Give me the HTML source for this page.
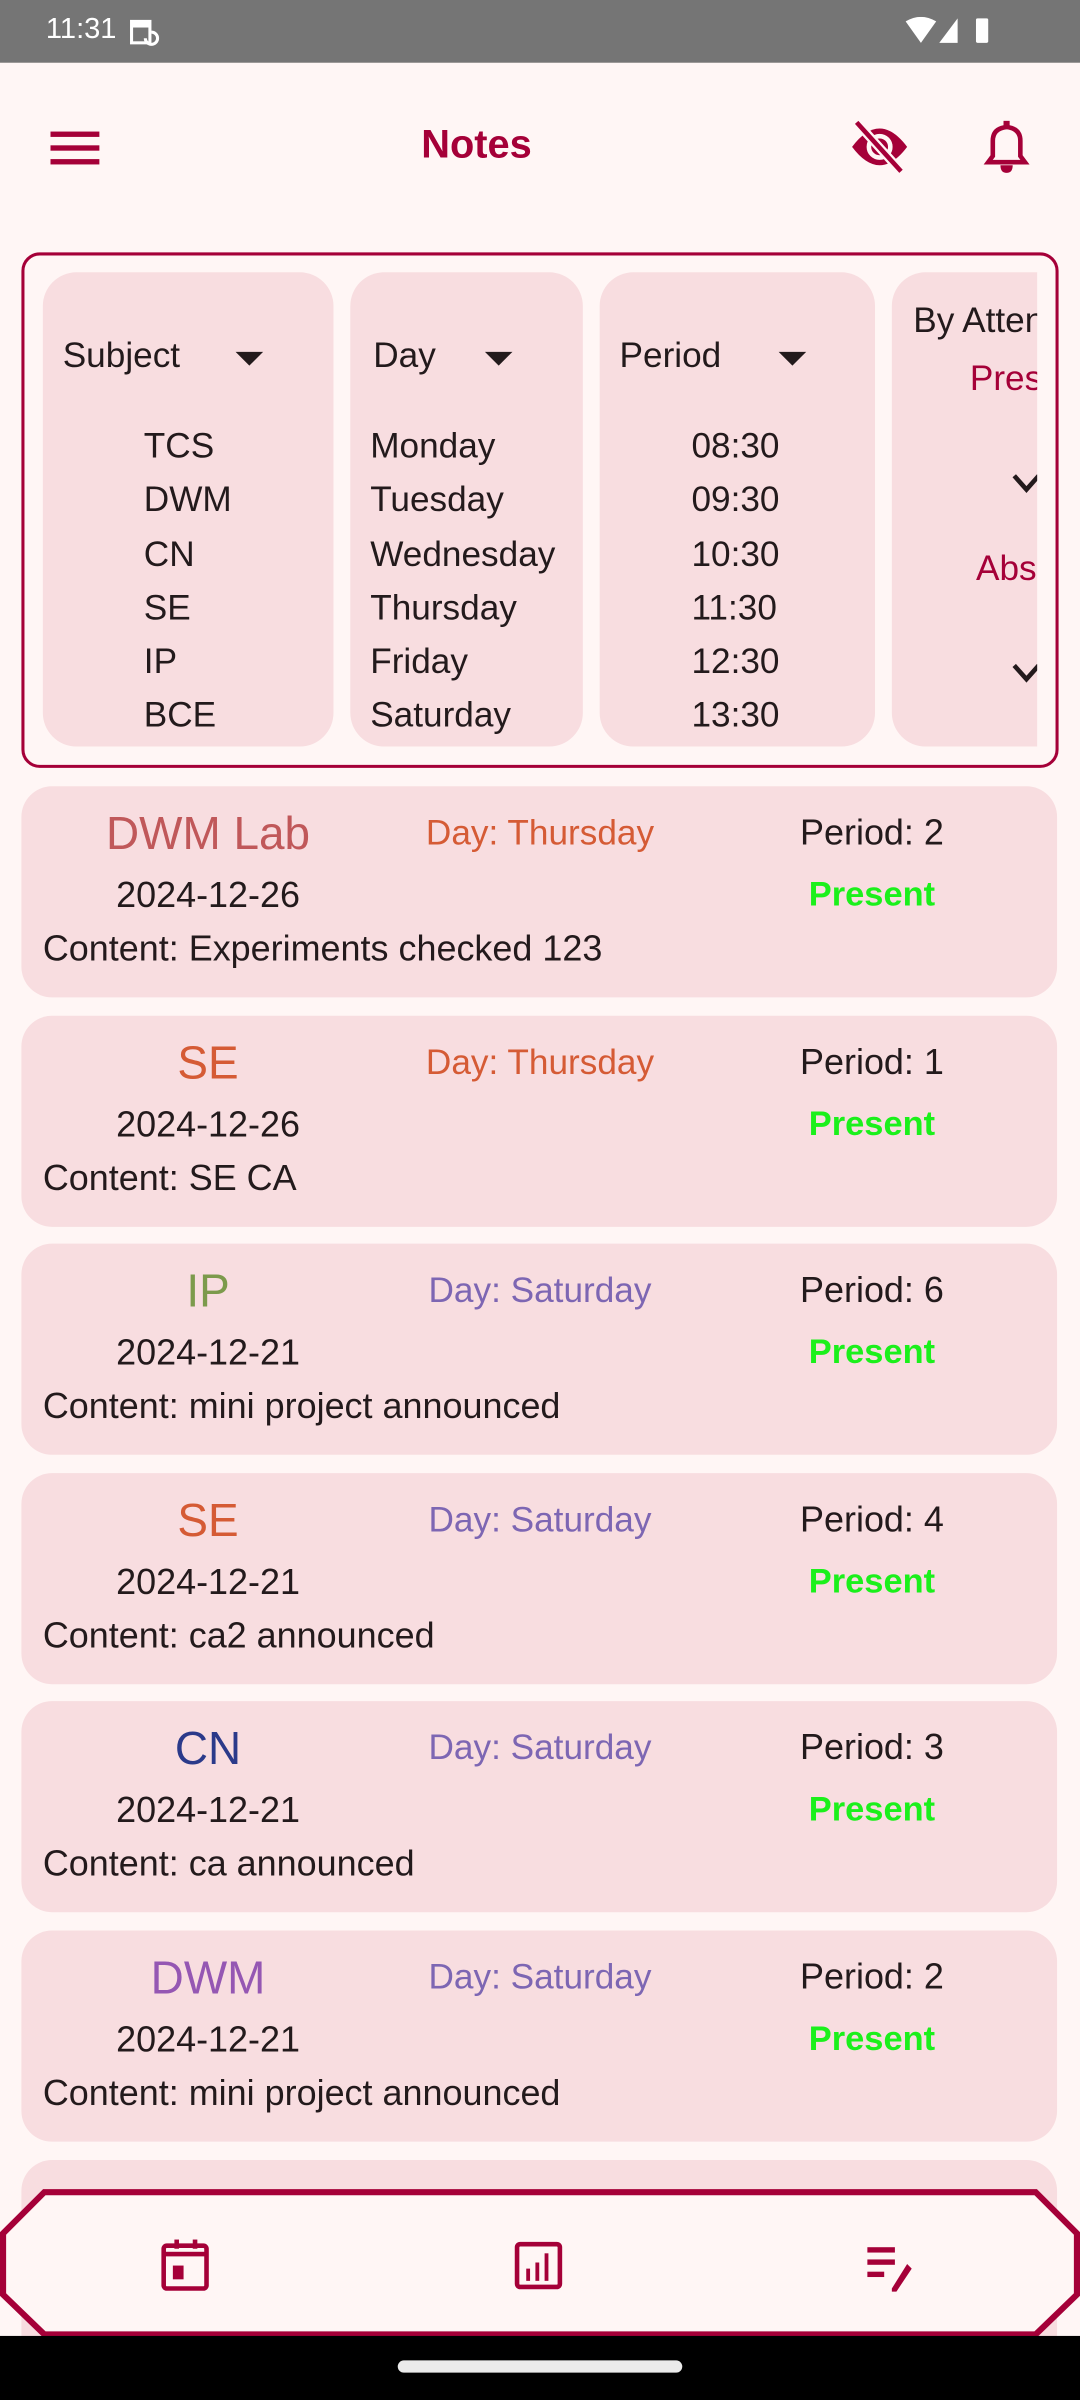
<!DOCTYPE html>
<html><head><meta charset="utf-8"><style>
*{margin:0;padding:0;box-sizing:border-box}
html,body{width:1080px;height:2400px;overflow:hidden;background:#fff6f5}
#w{position:absolute;left:0;top:0;width:706px;height:1569px;transform:scale(1.52975);transform-origin:0 0;font-family:"Liberation Sans",sans-serif;color:#231a1c;background:#fff6f5}
.a{position:absolute;white-space:nowrap}
.col{position:absolute;top:178px;height:310px;background:#f8dde0;border-radius:22px;overflow:hidden}
.li{position:absolute;font-size:23px;line-height:26px;white-space:nowrap}
.card{position:absolute;left:14px;width:677px;height:138px;background:#f8dde0;border-radius:20px}
.card div{white-space:nowrap}
.card .s{position:absolute;left:0;width:244px;text-align:center;top:14px;font-size:30px;line-height:36px}
.card .d{position:absolute;left:0;width:244px;text-align:center;top:57px;font-size:23.5px;line-height:28px}
.card .dy{position:absolute;left:234px;width:210px;text-align:center;top:16px;font-size:23px;line-height:28px}
.card .p{position:absolute;left:460px;width:192px;text-align:center;top:16px;font-size:23.5px;line-height:28px}
.card .pr{position:absolute;left:460px;width:192px;text-align:center;top:57px;font-size:22.5px;line-height:28px;font-weight:bold;color:#1bf01b}
.card .c{position:absolute;left:14px;top:92px;font-size:23.5px;line-height:28px}
.tri{position:absolute;width:0;height:0;border-left:9px solid transparent;border-right:9px solid transparent;border-top:9px solid #231a1c}
</style></head><body><div id="w">
<div class="a" style="left:0;top:0;width:706px;height:41px;background:#757575"></div>
<div class="a" style="left:30px;top:9px;color:#fff;font-size:19px">11:31</div>
<svg class="a" style="left:84px;top:10px" width="22" height="22" viewBox="0 0 22 22"><rect x="2" y="4" width="12" height="14" fill="none" stroke="#fff" stroke-width="2"/><rect x="2" y="4" width="12" height="4" fill="#fff"/><path d="M11 15a4 4 0 1 0 4-4" fill="none" stroke="#fff" stroke-width="2"/></svg>
<svg class="a" style="left:592px;top:11px" width="70" height="20" viewBox="0 0 70 20"><path d="M0 3Q10 -3 20 3L10 17Z" fill="#fff"/><path d="M34 1V17H22Z" fill="#fff"/><rect x="46" y="1" width="8" height="16" rx="1" fill="#fff"/></svg>
<svg class="a" style="left:33px;top:86px" width="32" height="22" viewBox="0 0 32 22"><rect y="0" width="32" height="3.5" fill="#a50038"/><rect y="9" width="32" height="3.5" fill="#a50038"/><rect y="18" width="32" height="3.5" fill="#a50038"/></svg>
<div class="a" style="left:0;width:623px;text-align:center;top:79px;font-size:26px;font-weight:bold;color:#a50038">Notes</div>
<svg class="a" style="left:555px;top:78px" width="40" height="36" viewBox="0 0 40 36"><path d="M2 18Q20 -6 38 18Q20 42 2 18Z" fill="#a50038"/><circle cx="20" cy="18" r="7" fill="none" stroke="#fff6f5" stroke-width="3"/><path d="M5 2L34 34" stroke="#fff6f5" stroke-width="6"/><path d="M5 2L34 34" stroke="#a50038" stroke-width="3"/></svg>
<svg class="a" style="left:641px;top:78px" width="34" height="36" viewBox="0 0 34 36"><path d="M5 28H29L26 24V14Q26 6 17 5Q8 6 8 14V24Z" fill="none" stroke="#a50038" stroke-width="3"/><rect x="15" y="1" width="4" height="5" fill="#a50038"/><path d="M13 30H21Q21 35 17 35Q13 35 13 30Z" fill="#a50038"/></svg>

<div class="a" style="left:14px;top:165px;width:678px;height:337px;border:2px solid #a50038;border-radius:12px"></div>
<div class="col" style="left:28px;width:190px">
<div class="li" style="left:13px;top:41px">Subject</div><div class="tri" style="left:126px;top:52px"></div>
<div class="li" style="left:66px;top:100px">TCS</div><div class="li" style="left:66px;top:135px">DWM</div><div class="li" style="left:66px;top:171px">CN</div><div class="li" style="left:66px;top:206px">SE</div><div class="li" style="left:66px;top:241px">IP</div><div class="li" style="left:66px;top:276px">BCE</div>
</div>
<div class="col" style="left:229px;width:152px">
<div class="li" style="left:15px;top:41px">Day</div><div class="tri" style="left:88px;top:52px"></div>
<div class="li" style="left:13px;top:100px">Monday</div><div class="li" style="left:13px;top:135px">Tuesday</div><div class="li" style="left:13px;top:171px">Wednesday</div><div class="li" style="left:13px;top:206px">Thursday</div><div class="li" style="left:13px;top:241px">Friday</div><div class="li" style="left:13px;top:276px">Saturday</div>
</div>
<div class="col" style="left:392px;width:180px">
<div class="li" style="left:13px;top:41px">Period</div><div class="tri" style="left:117px;top:52px"></div>
<div class="li" style="left:60px;top:100px">08:30</div><div class="li" style="left:60px;top:135px">09:30</div><div class="li" style="left:60px;top:171px">10:30</div><div class="li" style="left:60px;top:206px">11:30</div><div class="li" style="left:60px;top:241px">12:30</div><div class="li" style="left:60px;top:276px">13:30</div>
</div>
<div class="col" style="left:583px;width:95px;border-radius:22px 0 0 22px">
<div class="li" style="left:14px;top:18px">By Attendance</div>
<div class="li" style="left:51px;top:56px;color:#a50038">Present</div>
<svg class="a" style="left:78px;top:130px" width="20" height="16" viewBox="0 0 20 16"><path d="M2 3L10 12L18 3" fill="none" stroke="#231a1c" stroke-width="3"/></svg>
<div class="li" style="left:55px;top:180px;color:#a50038">Absent</div>
<svg class="a" style="left:78px;top:254px" width="20" height="16" viewBox="0 0 20 16"><path d="M2 3L10 12L18 3" fill="none" stroke="#231a1c" stroke-width="3"/></svg>
</div>

<div class="card" style="top:514px"><div class="s" style="color:#c0585a">DWM Lab</div><div class="d">2024-12-26</div><div class="dy" style="color:#d55b35">Day: Thursday</div><div class="p">Period: 2</div><div class="pr">Present</div><div class="c">Content: Experiments checked 123</div></div>
<div class="card" style="top:664px"><div class="s" style="color:#d55b35">SE</div><div class="d">2024-12-26</div><div class="dy" style="color:#d55b35">Day: Thursday</div><div class="p">Period: 1</div><div class="pr">Present</div><div class="c">Content: SE CA</div></div>
<div class="card" style="top:813px"><div class="s" style="color:#7c9a4c">IP</div><div class="d">2024-12-21</div><div class="dy" style="color:#7d66b3">Day: Saturday</div><div class="p">Period: 6</div><div class="pr">Present</div><div class="c">Content: mini project announced</div></div>
<div class="card" style="top:963px"><div class="s" style="color:#d55b35">SE</div><div class="d">2024-12-21</div><div class="dy" style="color:#7d66b3">Day: Saturday</div><div class="p">Period: 4</div><div class="pr">Present</div><div class="c">Content: ca2 announced</div></div>
<div class="card" style="top:1112px"><div class="s" style="color:#2b3a8a">CN</div><div class="d">2024-12-21</div><div class="dy" style="color:#7d66b3">Day: Saturday</div><div class="p">Period: 3</div><div class="pr">Present</div><div class="c">Content: ca announced</div></div>
<div class="card" style="top:1262px"><div class="s" style="color:#9557b3">DWM</div><div class="d">2024-12-21</div><div class="dy" style="color:#7d66b3">Day: Saturday</div><div class="p">Period: 2</div><div class="pr">Present</div><div class="c">Content: mini project announced</div></div>
<div class="card" style="top:1412px"></div>

<svg class="a" style="left:0;top:1430px" width="706" height="98" viewBox="0 0 706 98"><path d="M29 3H677L704 30V70L677 96H29L2 70V30Z" fill="#fff6f5" stroke="#a50038" stroke-width="4"/></svg>
<svg class="a" style="left:104px;top:1463px" width="36" height="36" viewBox="0 0 36 36"><rect x="3" y="5" width="28" height="28" rx="2" fill="none" stroke="#a50038" stroke-width="3"/><rect x="3" y="9" width="28" height="3" fill="#a50038"/><rect x="10" y="1" width="3" height="6" fill="#a50038"/><rect x="22" y="1" width="3" height="6" fill="#a50038"/><rect x="9" y="18" width="7" height="9" fill="#a50038"/></svg>
<svg class="a" style="left:335px;top:1464px" width="36" height="36" viewBox="0 0 36 36"><rect x="3" y="3" width="28" height="28" rx="2" fill="none" stroke="#a50038" stroke-width="3"/><rect x="9" y="19" width="2.5" height="8" fill="#a50038"/><rect x="15" y="15" width="2.5" height="12" fill="#a50038"/><rect x="21" y="9" width="2.5" height="18" fill="#a50038"/></svg>
<svg class="a" style="left:565px;top:1466px" width="36" height="36" viewBox="0 0 36 36"><rect x="2" y="3" width="18" height="3.5" fill="#a50038"/><rect x="2" y="11" width="18" height="3.5" fill="#a50038"/><rect x="2" y="19" width="11" height="3.5" fill="#a50038"/><path d="M18 30L28 14L31 17L21 32H18Z" fill="#a50038"/></svg>

<div class="a" style="left:0;top:1527px;width:706px;height:42px;background:#000"></div>
<div class="a" style="left:260px;top:1543px;width:186px;height:8px;border-radius:4px;background:#ebebeb"></div>
</div></body></html>
